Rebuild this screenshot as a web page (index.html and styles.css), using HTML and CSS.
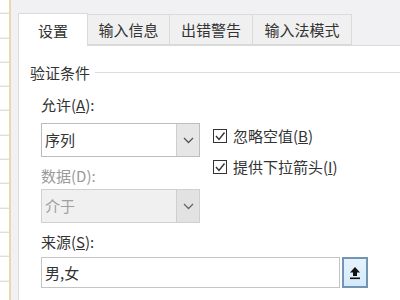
FILE: index.html
```html
<!DOCTYPE html>
<html lang="zh-CN">
<head>
<meta charset="utf-8">
<link rel="stylesheet" href="styles.css">
</head>
<body>
<div class="screen">
  <div class="sheet"></div>
  <div class="edge"></div>
  <div class="dialog">
    <div class="tabs">
      <div class="tab active">设置</div>
      <div class="tab w2">输入信息</div>
      <div class="tab w3">出错警告</div>
      <div class="tab w4">输入法模式</div>
    </div>
    <div class="panel">
      <div class="group-head"><span class="group-title">验证条件</span><span class="group-line"></span></div>
      <div class="body">
        <div class="cols">
          <div class="left">
            <div class="label">允许(<u>A</u>):</div>
            <div class="select">
              <span class="select-text">序列</span>
              <span class="select-btn"><svg width="11" height="7" viewBox="0 0 11 7"><polyline points="1,1 5.5,5.5 10,1" fill="none" stroke="#555" stroke-width="1.3"/></svg></span>
            </div>
            <div class="label dim l2">数据(D):</div>
            <div class="select disabled">
              <span class="select-text">介于</span>
              <span class="select-btn"><svg width="11" height="7" viewBox="0 0 11 7"><polyline points="1,1 5.5,5.5 10,1" fill="none" stroke="#666" stroke-width="1.3"/></svg></span>
            </div>
          </div>
          <div class="right">
            <div class="check-row">
              <span class="box"><svg width="12" height="12" viewBox="0 0 12 12"><polyline points="2,6 5,9.5 10.5,2.5" fill="none" stroke="#333" stroke-width="1.4"/></svg></span>
              <span>忽略空值(<u>B</u>)</span>
            </div>
            <div class="check-row r2">
              <span class="box"><svg width="12" height="12" viewBox="0 0 12 12"><polyline points="2,6 5,9.5 10.5,2.5" fill="none" stroke="#333" stroke-width="1.4"/></svg></span>
              <span>提供下拉箭头(<u>I</u>)</span>
            </div>
          </div>
        </div>
        <div class="label l3">来源(<u>S</u>):</div>
        <div class="source">
          <div class="source-input">男,女</div>
          <div class="source-btn"><svg width="12" height="14" viewBox="0 0 12 14"><path d="M6 1 L11 6.5 L8 6.5 L8 10 L4 10 L4 6.5 L1 6.5 Z" fill="#111"/><rect x="1" y="11.5" width="10" height="1.6" fill="#111"/></svg></div>
        </div>
      </div>
    </div>
  </div>
</div>
</body>
</html>
```

FILE: styles.css
```css
html, body {
  margin: 0;
  padding: 0;
  width: 400px;
  height: 300px;
  overflow: hidden;
  background: #f0f0f0;
}
.screen {
  display: flex;
  width: 400px;
  height: 300px;
  font-family: "Noto Sans CJK SC", "Liberation Sans", sans-serif;
  font-size: 15px;
  color: #333;
}
.sheet {
  width: 9px;
  background-color: #fff;
  background-image: repeating-linear-gradient(to bottom, transparent 0, transparent 23.3px, #d2d2d2 23.3px, #d2d2d2 24.3px);
  background-position: 0 -10.3px;
}
.edge {
  width: 2px;
  background: #ead7ad;
}
.dialog {
  flex: 1;
  background: #f1f1f3;
  padding: 13px 0 0 7px;
  display: flex;
  flex-direction: column;
}
.tabs {
  display: flex;
  align-items: flex-end;
  height: 33px;
  position: relative;
  z-index: 1;
  margin-bottom: -1px;
}
.tab {
  box-sizing: border-box;
  height: 31px;
  line-height: 29px;
  border: 1px solid #dadada;
  border-left: none;
  background: #f0f0f0;
  text-align: center;
  margin-bottom: 1px;
}
.tab.active {
  width: 70px;
  height: 33px;
  line-height: 33px;
  background: #fff;
  border-left: 1px solid #dadada;
  border-bottom: none;
  margin-bottom: 0;
}
.tab.w2 { width: 82px; }
.tab.w3 { width: 83px; }
.tab.w4 { width: 99px; }
.panel {
  flex: 1;
  background: #fff;
  border-top: 1px solid #dadada;
  border-left: 1px solid #dadada;
  padding: 17px 0 0 11px;
}
.group-head {
  display: flex;
  align-items: center;
  height: 20px;
  line-height: 20px;
}
.group-title {
  padding-right: 5px;
}
.group-line {
  flex: 1;
  border-top: 1px solid #dcdcdc;
  margin-top: -1px;
}
.body {
  margin-top: 12px;
  padding-left: 11px;
}
.cols {
  display: flex;
}
.left {
  width: 159px;
}
.label {
  height: 20px;
  line-height: 20px;
}
.label.dim { color: #9a9a9a; }
.label.l2 { margin-top: 9px; }
.label.l3 { margin-top: 9px; }
.select {
  box-sizing: border-box;
  margin-top: 8px;
  height: 34px;
  border: 1px solid #bdbdbd;
  background: #fff;
  display: flex;
}
.select.disabled {
  margin-top: 3px;
  background: #f0f0f0;
  border-color: #d0d0d0;
  color: #a0a0a0;
}
.select-text {
  flex: 1;
  line-height: 32px;
  padding-left: 3px;
}
.select-btn {
  width: 22px;
  background: #e6e6e6;
  border-left: 1px solid #cfcfcf;
  display: flex;
  align-items: center;
  justify-content: center;
}
.select.disabled .select-btn {
  background: #e2e2e2;
}
.right {
  margin-left: 13px;
  padding-top: 31px;
}
.check-row {
  display: flex;
  align-items: center;
  height: 20px;
  line-height: 20px;
  gap: 6px;
}
.check-row.r2 { margin-top: 11px; }
.box {
  box-sizing: border-box;
  width: 14px;
  height: 14px;
  border: 1px solid #333;
  background: #fff;
  display: flex;
  align-items: center;
  justify-content: center;
}
.source {
  display: flex;
  margin-top: 5px;
  gap: 2px;
}
.source-input {
  box-sizing: border-box;
  width: 299px;
  height: 31px;
  border: 1px solid #c4c4c4;
  line-height: 29px;
  padding-left: 3px;
}
.source-btn {
  box-sizing: border-box;
  width: 26px;
  height: 31px;
  border: 2px solid #7395b4;
  background: linear-gradient(#e6f3fd, #d4eafb);
  display: flex;
  align-items: center;
  justify-content: center;
}
```
